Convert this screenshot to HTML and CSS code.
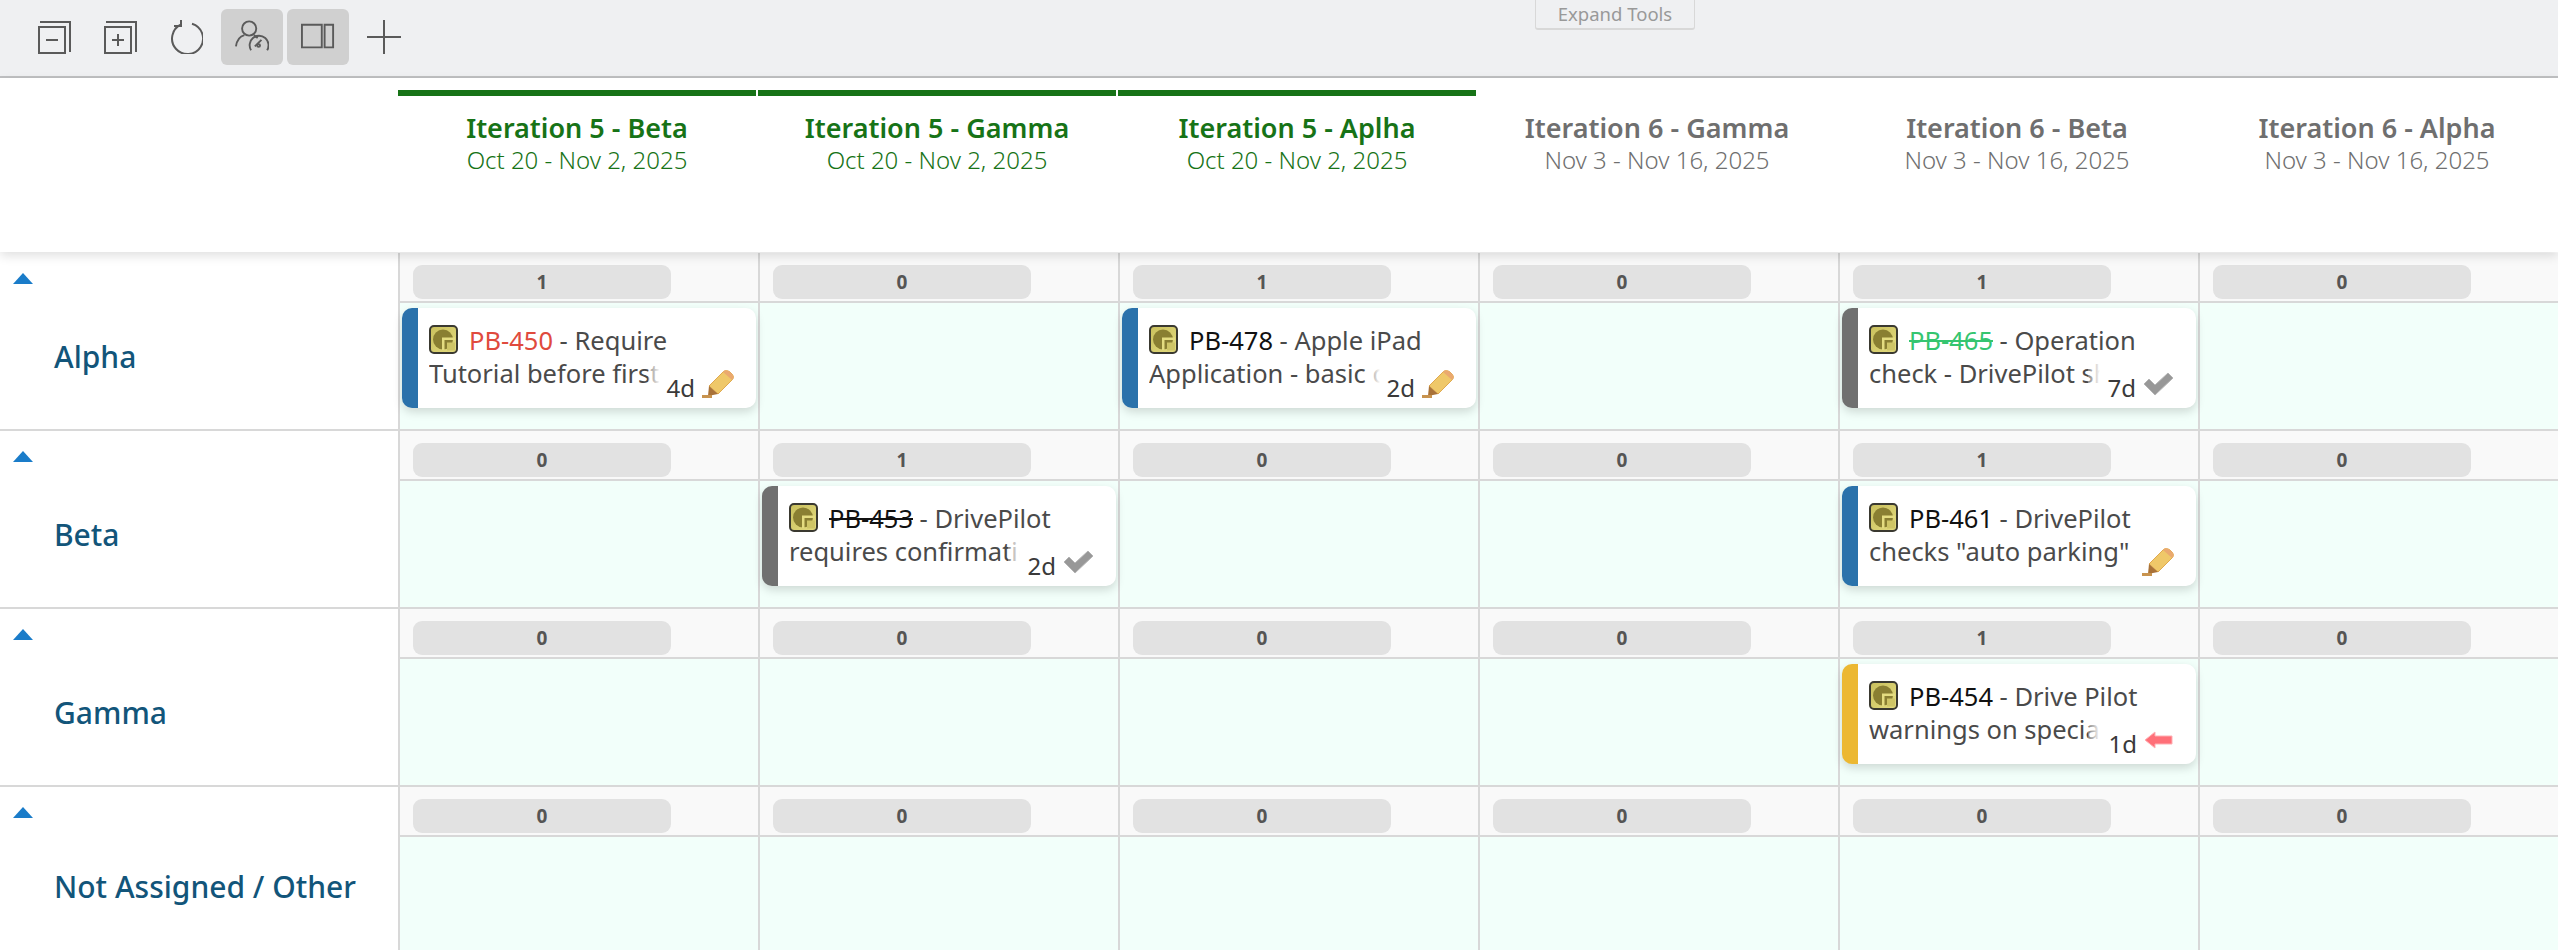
FILE: index.html
```html
<!DOCTYPE html>
<html lang="en">
<head>
  <meta charset="UTF-8" />
  <title>Plan View</title>
  <link rel="stylesheet" href="styles.css">
</head>
<body>
  <svg class="defs" width="0" height="0">
    <defs>
      <linearGradient id="chip" x1="0" y1="0" x2="1" y2="1">
        <stop offset="0" stop-color="#c9bf5c" />
        <stop offset="1" stop-color="#e4dc80" />
      </linearGradient>
      <symbol id="story" viewBox="0 0 29 29">
        <rect x="1" y="1" width="27" height="27" rx="4" fill="url(#chip)" stroke="#3a3930" stroke-width="2" />
        <circle cx="14" cy="14.500" r="10" fill="#8a7f32" />
        <path d="M13 12.500h13v2.500H15.500v10H13z" fill="#e4dc80" />
        <path d="M18 17.500h8v8h-8z" fill="#cfc566" />
      </symbol>
      <symbol id="pencil" viewBox="0 0 32 28">
        <path d="M7 16 21 2c2-2 5-2 8 1s3 5 1 7L16 24z" fill="#efc869" stroke="#e0a94f" stroke-width="1" />
        <path d="M21 2c2-2 5-2 8 1s3 5 1 7z" fill="#eaa96f" />
        <path d="M7 16l9 8-10 2z" fill="#a97238" />
        <path d="M0 28h10v-3H0z" fill="#c8934e" />
      </symbol>
      <symbol id="check" viewBox="0 0 31 24">
        <path d="M1 12l5-5 6 6L25 1l5 5-18 17z" fill="#989898" stroke="#b4b4b4" stroke-width="1" />
      </symbol>
      <symbol id="back" viewBox="0 0 29 18">
        <path d="M1 9 11 1v4h17v8H11v4z" fill="#ff6f78" stroke="#ffb0b4" stroke-width="1" />
      </symbol>
    </defs>
  </svg>

  <div class="toolbar">
    <button class="tool">
      <svg viewBox="0 0 34 34"><path d="M2 7h26v26H2zM3 2h30v30M9 20h12" /></svg>
    </button>
    <button class="tool">
      <svg viewBox="0 0 34 34"><path d="M2 7h26v26H2zM3 2h30v30M9 20h12M15 14v12" /></svg>
    </button>
    <button class="tool">
      <svg viewBox="0 0 34 34"><path d="M12 4.500A15.500 15.500 0 1 0 23 3.700M12 0v6H5" /></svg>
    </button>
    <button class="tool on">
      <svg viewBox="0 0 36 36"><circle cx="15" cy="9" r="7.500" /><path d="M1 28c1-7 5-11 9-12M20 16l4 3" /><path d="M17 32a10 10 0 1 1 17 0M21 28l7-7" /><circle cx="25" cy="27" r="1.500" /></svg>
    </button>
    <button class="tool on">
      <svg viewBox="0 0 36 36"><path d="M1 5h21v24H1zM25 5h9v24h-9z" /></svg>
    </button>
    <button class="tool">
      <svg viewBox="0 0 34 34"><path d="M17 0v34M0 17h34" /></svg>
    </button>
    <div class="expand">Expand Tools</div>
  </div>

  <div class="head">
    <div class="head-cell current"><b>Iteration 5 - Beta</b><span>Oct 20 - Nov 2, 2025</span></div>
    <div class="head-cell current"><b>Iteration 5 - Gamma</b><span>Oct 20 - Nov 2, 2025</span></div>
    <div class="head-cell current"><b>Iteration 5 - Aplha</b><span>Oct 20 - Nov 2, 2025</span></div>
    <div class="head-cell"><b>Iteration 6 - Gamma</b><span>Nov 3 - Nov 16, 2025</span></div>
    <div class="head-cell"><b>Iteration 6 - Beta</b><span>Nov 3 - Nov 16, 2025</span></div>
    <div class="head-cell"><b>Iteration 6 - Alpha</b><span>Nov 3 - Nov 16, 2025</span></div>
  </div>

  <div class="board">
    <div class="row">
      <div class="team"><i class="arrow"></i><div class="team-name">Alpha</div></div>
      <div class="cell">
        <div class="count"><span>1</span></div>
        <div class="items">
          <div class="card blue">
            <div class="line"><svg class="chip"><use href="#story" /></svg><span class="id red">PB-450</span> - Require</div>
            <div class="line cut">Tutorial before first use</div>
            <div class="meta"><span class="days">4d</span><svg class="pencil"><use href="#pencil" /></svg></div>
          </div>
        </div>
      </div>
      <div class="cell"><div class="count"><span>0</span></div><div class="items"></div></div>
      <div class="cell">
        <div class="count"><span>1</span></div>
        <div class="items">
          <div class="card blue">
            <div class="line"><svg class="chip"><use href="#story" /></svg><span class="id">PB-478</span> - Apple iPad</div>
            <div class="line cut">Application - basic controls</div>
            <div class="meta"><span class="days">2d</span><svg class="pencil"><use href="#pencil" /></svg></div>
          </div>
        </div>
      </div>
      <div class="cell"><div class="count"><span>0</span></div><div class="items"></div></div>
      <div class="cell">
        <div class="count"><span>1</span></div>
        <div class="items">
          <div class="card gray">
            <div class="line"><svg class="chip"><use href="#story" /></svg><span class="id green done">PB-465</span> - Operation</div>
            <div class="line cut">check - DrivePilot should</div>
            <div class="meta"><span class="days">7d</span><svg class="check"><use href="#check" /></svg></div>
          </div>
        </div>
      </div>
      <div class="cell"><div class="count"><span>0</span></div><div class="items"></div></div>
    </div>

    <div class="row">
      <div class="team"><i class="arrow"></i><div class="team-name">Beta</div></div>
      <div class="cell"><div class="count"><span>0</span></div><div class="items"></div></div>
      <div class="cell">
        <div class="count"><span>1</span></div>
        <div class="items">
          <div class="card gray">
            <div class="line"><svg class="chip"><use href="#story" /></svg><span class="id done">PB-453</span> - DrivePilot</div>
            <div class="line cut">requires confirmation</div>
            <div class="meta"><span class="days">2d</span><svg class="check"><use href="#check" /></svg></div>
          </div>
        </div>
      </div>
      <div class="cell"><div class="count"><span>0</span></div><div class="items"></div></div>
      <div class="cell"><div class="count"><span>0</span></div><div class="items"></div></div>
      <div class="cell">
        <div class="count"><span>1</span></div>
        <div class="items">
          <div class="card blue">
            <div class="line"><svg class="chip"><use href="#story" /></svg><span class="id">PB-461</span> - DrivePilot</div>
            <div class="line">checks "auto parking"</div>
            <div class="meta"><svg class="pencil"><use href="#pencil" /></svg></div>
          </div>
        </div>
      </div>
      <div class="cell"><div class="count"><span>0</span></div><div class="items"></div></div>
    </div>

    <div class="row">
      <div class="team"><i class="arrow"></i><div class="team-name">Gamma</div></div>
      <div class="cell"><div class="count"><span>0</span></div><div class="items"></div></div>
      <div class="cell"><div class="count"><span>0</span></div><div class="items"></div></div>
      <div class="cell"><div class="count"><span>0</span></div><div class="items"></div></div>
      <div class="cell"><div class="count"><span>0</span></div><div class="items"></div></div>
      <div class="cell">
        <div class="count"><span>1</span></div>
        <div class="items">
          <div class="card yellow">
            <div class="line"><svg class="chip"><use href="#story" /></svg><span class="id">PB-454</span> - Drive Pilot</div>
            <div class="line cut">warnings on special roads</div>
            <div class="meta"><span class="days">1d</span><svg class="back"><use href="#back" /></svg></div>
          </div>
        </div>
      </div>
      <div class="cell"><div class="count"><span>0</span></div><div class="items"></div></div>
    </div>

    <div class="row last">
      <div class="team"><i class="arrow"></i><div class="team-name">Not Assigned / Other</div></div>
      <div class="cell"><div class="count"><span>0</span></div><div class="items"></div></div>
      <div class="cell"><div class="count"><span>0</span></div><div class="items"></div></div>
      <div class="cell"><div class="count"><span>0</span></div><div class="items"></div></div>
      <div class="cell"><div class="count"><span>0</span></div><div class="items"></div></div>
      <div class="cell"><div class="count"><span>0</span></div><div class="items"></div></div>
      <div class="cell"><div class="count"><span>0</span></div><div class="items"></div></div>
    </div>
  </div>
</body>
</html>
```

FILE: styles.css
```css
html, body {
  margin: 0;
  height: 950px;
  overflow: hidden;
}

body {
  font-family: "Noto Sans", sans-serif;
  background-color: #fff;
  color: #4a4a4a;
}

.defs {
  position: absolute;
}

.toolbar {
  height: 78px;
  box-sizing: border-box;
  background-color: #eff0f2;
  border-bottom: 2px solid #bfc0c2;
  display: flex;
  align-items: flex-start;
  padding: 9px 0 0 23px;
  position: relative;
}

.tool {
  width: 62px;
  height: 56px;
  margin-right: 4px;
  padding: 0;
  border: none;
  border-radius: 6px;
  background: none;
  display: flex;
  align-items: center;
  justify-content: center;
}

.tool svg {
  width: 34px;
  height: 34px;
  fill: none;
  stroke: #5a5a5a;
  stroke-width: 2;
}

.tool.on {
  background-color: #d0d0d0;
}

.expand {
  position: absolute;
  left: 1535px;
  top: -1px;
  width: 158px;
  height: 28px;
  border: 1px solid #d8d8d8;
  border-bottom-width: 2px;
  border-radius: 0 0 3px 3px;
  font-size: 18.500px;
  line-height: 28px;
  text-align: center;
  color: #999;
}

.head {
  height: 174px;
  padding-left: 398px;
  padding-top: 12px;
  box-sizing: border-box;
  display: flex;
  background-color: #fff;
  position: relative;
  z-index: 2;
  box-shadow: 0 4px 10px rgba(0, 0, 0, 0.12);
}

.head-cell {
  flex: 0 0 358px;
  margin-right: 2px;
  height: 100%;
  border-top: 6px solid transparent;
  padding-top: 15px;
  box-sizing: border-box;
  text-align: center;
  color: #6f6f6f;
}

.head-cell.current {
  border-top-color: #177317;
  color: #177317;
}

.head-cell b {
  display: block;
  font-size: 27px;
  line-height: 34px;
  font-weight: 600;
}

.head-cell span {
  display: block;
  font-size: 24px;
  line-height: 30px;
  font-weight: 300;
}

.board {
  padding-top: 1px;
}

.row {
  display: grid;
  grid-template-columns: 400px repeat(6, 360px);
  height: 178px;
}

.row.last {
  height: 170px;
}

.team {
  border-right: 2px solid #d8d8d8;
  border-bottom: 2px solid #d8d8d8;
  display: flex;
  flex-direction: column;
  padding-top: 20px;
  box-sizing: border-box;
}

.arrow {
  display: block;
  width: 0;
  height: 0;
  margin-left: 13px;
  border-left: 10px solid transparent;
  border-right: 10px solid transparent;
  border-bottom: 11px solid #1a7cc9;
}

.team-name {
  flex: 1;
  display: flex;
  align-items: center;
  padding-left: 54px;
  font-size: 30px;
  font-weight: 500;
  color: #12557a;
}

.cell {
  border-right: 2px solid #d8d8d8;
  border-bottom: 2px solid #d8d8d8;
  display: flex;
  flex-direction: column;
  box-sizing: border-box;
  min-width: 0;
}

.count {
  flex: none;
  height: 36px;
  background-color: #f9f9f9;
  border-bottom: 2px solid #d8d8d8;
  padding: 12px 0 0 13px;
}

.count span {
  display: block;
  width: 258px;
  height: 34px;
  border-radius: 9px;
  background-color: #e2e2e2;
  font-size: 19px;
  line-height: 34px;
  font-weight: 700;
  text-align: center;
  color: #555;
}

.items {
  flex: 1;
  background-color: #f2fffa;
  padding: 5px 0 0 2px;
}

.card {
  width: 354px;
  height: 100px;
  box-sizing: border-box;
  padding: 16px 12px 0 11px;
  border-radius: 10px;
  border-left: 16px solid #2a72ab;
  background-color: #fff;
  box-shadow: 0 4px 10px rgba(0, 0, 0, 0.15);
  font-size: 25.500px;
  line-height: 33px;
  position: relative;
}

.card.gray {
  border-left-color: #707070;
}

.card.yellow {
  border-left-color: #ecb832;
}

.line {
  white-space: nowrap;
}

.line.cut {
  width: 231px;
  overflow: hidden;
  position: relative;
}

.line.cut::after {
  content: "";
  position: absolute;
  right: 0;
  top: 0;
  bottom: 0;
  width: 12px;
  background: linear-gradient(to right, rgba(255, 255, 255, 0.3), #fff);
}

.chip {
  width: 29px;
  height: 29px;
  vertical-align: -4px;
  margin-right: 11px;
}

.id {
  color: #111;
}

.id.red {
  color: #e04a3d;
}

.id.green {
  color: #35c56f;
}

.id.done {
  text-decoration: line-through;
}

.meta {
  position: absolute;
  right: 22px;
  bottom: 4px;
  height: 40px;
  display: flex;
  align-items: center;
  gap: 7px;
  color: #3a3a3a;
}

.days {
  font-size: 24px;
  margin-top: 6px;
}

.pencil {
  width: 32px;
  height: 28px;
}

.check {
  width: 31px;
  height: 24px;
}

.back {
  width: 29px;
  height: 18px;
  margin-right: 1px;
}
```
